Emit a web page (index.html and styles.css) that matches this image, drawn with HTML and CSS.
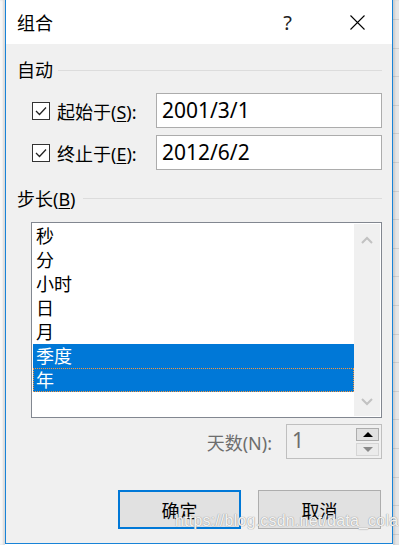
FILE: index.html
```html
<!DOCTYPE html>
<html lang="zh-CN">
  <head>
    <meta charset="UTF-8" />
    <meta name="viewport" content="width=device-width, initial-scale=1.0" />
    <title>组合</title>
    <link rel="stylesheet" href="styles.css">
  </head>
  <body>
    <div class="sheet-left"></div>

    <div class="dialog">
      <!-- Title bar -->
      <div class="titlebar">
        <span class="title">组合</span>
        <span class="help">?</span>
        <span class="close">
          <svg width="15" height="15" viewBox="0 0 15 15">
            <path d="M0.5 0.5 L14.5 14.5 M14.5 0.5 L0.5 14.5" stroke="#000" stroke-width="1.1" fill="none" />
          </svg>
        </span>
      </div>

      <div class="content">
        <div class="group-head">
          <span>自动</span>
          <div class="rule"></div>
        </div>

        <div class="date-row">
          <label class="check">
            <span class="box">
              <svg width="16" height="16" viewBox="0 0 16 16">
                <polyline points="3,8 6.5,11.5 13,4.5" stroke="#222" stroke-width="1.3" fill="none" />
              </svg>
            </span>
            <span>起始于(<u>S</u>):</span>
          </label>
          <div class="field">2001/3/1</div>
        </div>

        <div class="date-row">
          <label class="check">
            <span class="box">
              <svg width="16" height="16" viewBox="0 0 16 16">
                <polyline points="3,8 6.5,11.5 13,4.5" stroke="#222" stroke-width="1.3" fill="none" />
              </svg>
            </span>
            <span>终止于(<u>E</u>):</span>
          </label>
          <div class="field">2012/6/2</div>
        </div>

        <div class="group-head step-head">
          <span>步长(<u>B</u>)</span>
          <div class="rule"></div>
        </div>

        <div class="listbox">
          <ul class="items">
            <li>秒</li>
            <li>分</li>
            <li>小时</li>
            <li>日</li>
            <li>月</li>
            <li class="selected">季度</li>
            <li class="selected focused">年</li>
          </ul>
          <div class="scrollbar">
            <svg width="12" height="8" viewBox="0 0 12 8">
              <polyline points="1,7 6,2 11,7" stroke="#c2c2c2" stroke-width="2" fill="none" />
            </svg>
            <svg width="12" height="8" viewBox="0 0 12 8">
              <polyline points="1,1 6,6 11,1" stroke="#c2c2c2" stroke-width="2" fill="none" />
            </svg>
          </div>
        </div>

        <div class="days-row">
          <span class="days-label">天数(N):</span>
          <div class="spinner">
            <span class="spin-value">1</span>
            <div class="spin-buttons">
              <span class="spin-up"></span>
              <span class="spin-down"></span>
            </div>
          </div>
        </div>

        <div class="actions">
          <button class="btn primary">确定</button>
          <button class="btn">取消</button>
        </div>
      </div>

      <div class="watermark">https://blog.csdn.net/data_cola</div>
    </div>

    <div class="sheet-right"></div>
  </body>
</html>
```

FILE: styles.css
```css
/* Page */
body {
  margin: 0;
  width: 399px;
  height: 545px;
  overflow: hidden;
  display: flex;
  background: #fff;
  font-family: "Noto Sans", "Noto Sans CJK SC", sans-serif;
  font-size: 18px;
  color: #000;
}

/* Bits of the worksheet behind the dialog */
.sheet-left {
  width: 5px;
  background: #f7f7f7;
  box-shadow: inset -2px 0 2px rgba(0, 0, 0, 0.12);
}

.sheet-right {
  flex: 1;
  background: repeating-linear-gradient(
    to bottom,
    #e6e6e6 0,
    #e6e6e6 19px,
    #cfcfcf 19px,
    #cfcfcf 20px,
    #e6e6e6 20px,
    #e6e6e6 28.6px
  );
  box-shadow: inset 2px 0 2px rgba(0, 0, 0, 0.1);
}

/* Dialog frame */
.dialog {
  position: relative;
  width: 388px;
  height: 544px;
  box-sizing: border-box;
  border: 1px solid #1883d7;
  border-top: none;
  background: #f0f0f0;
  display: flex;
  flex-direction: column;
}

.titlebar {
  height: 44px;
  background: #fff;
  display: flex;
  align-items: center;
}

.title {
  flex: 1;
  padding-left: 11px;
  font-size: 18px;
}

.help {
  width: 69px;
  text-align: center;
  font-size: 20px;
  color: #222;
}

.close {
  width: 70px;
  display: flex;
  justify-content: center;
}

/* Body */
.content {
  padding: 0 10px 0 11px;
  display: flex;
  flex-direction: column;
}

.group-head {
  display: flex;
  align-items: center;
  height: 24px;
  margin-top: 14px;
  line-height: 24px;
}

.group-head .rule {
  flex: 1;
  height: 1px;
  background: #dcdcdc;
  margin-left: 5px;
}

.step-head {
  margin-top: 17px;
}

.step-head .rule {
  margin-left: 7px;
  margin-top: -2px;
}

u {
  text-decoration-thickness: 1px;
  text-underline-offset: 2px;
}

.date-row {
  display: flex;
  align-items: center;
  margin-top: 11px;
  padding-left: 15px;
}

.date-row + .date-row {
  margin-top: 7px;
}

.check {
  width: 124px;
  display: flex;
  align-items: center;
  gap: 7px;
  white-space: nowrap;
}

.box {
  width: 18px;
  height: 18px;
  box-sizing: border-box;
  border: 1px solid #333;
  background: #fff;
  display: flex;
  align-items: center;
  justify-content: center;
}

.field {
  flex: 1;
  height: 35px;
  box-sizing: border-box;
  border: 1px solid #acacac;
  background: #fff;
  padding-left: 5px;
  font-size: 21px;
  line-height: 33px;
}

/* List box */
.listbox {
  margin: 11px 0 0 14px;
  height: 196px;
  box-sizing: border-box;
  border: 1px solid #828790;
  background: #fff;
  padding: 1px;
  display: flex;
}

.items {
  flex: 1;
  list-style: none;
  margin: 0;
  padding: 0;
}

.items li {
  height: 24px;
  line-height: 24px;
  padding-left: 3px;
}

.items li.selected {
  background: #0078d7;
  color: #fff;
}

.items li.focused {
  outline: 1px dotted #f7963c;
  outline-offset: -1px;
}

.scrollbar {
  width: 26px;
  background: #f0f0f0;
  display: flex;
  flex-direction: column;
  justify-content: space-between;
  align-items: center;
  padding: 12px 0 10px;
}

/* Days spinner */
.days-row {
  margin-top: 6px;
  display: flex;
  justify-content: flex-end;
  align-items: center;
  gap: 14px;
}

.days-label {
  color: #6d6d6d;
}

.spinner {
  width: 96px;
  height: 35px;
  box-sizing: border-box;
  border: 1px solid #bfbfbf;
  padding: 3px 2px 2px 4px;
  display: flex;
  background: #f0f0f0;
}

.spin-value {
  flex: 1;
  color: #6d6d6d;
  font-size: 21px;
  line-height: 24px;
  padding-left: 1px;
}

.spin-buttons {
  width: 23px;
  display: flex;
  flex-direction: column;
  gap: 2px;
}

.spin-up,
.spin-down {
  flex: 1;
  box-sizing: border-box;
  display: flex;
  align-items: center;
  justify-content: center;
}

.spin-up {
  border: 1px solid #adadad;
  background: #e1e1e1;
}

.spin-down {
  border: 1px solid #d5d5d5;
  background: #ebebeb;
}

.spin-up::after {
  content: "";
  border-left: 5px solid transparent;
  border-right: 5px solid transparent;
  border-bottom: 5px solid #000;
}

.spin-down::after {
  content: "";
  border-left: 5px solid transparent;
  border-right: 5px solid transparent;
  border-top: 5px solid #8a8a8a;
}

/* Buttons */
.actions {
  margin-top: 31px;
  display: flex;
  justify-content: flex-end;
  gap: 17px;
  padding-right: 1px;
}

.btn {
  width: 123px;
  height: 39px;
  box-sizing: border-box;
  border: 1px solid #adadad;
  background: #e1e1e1;
  font-family: "Noto Sans CJK SC", sans-serif;
  font-size: 18px;
  color: #000;
  padding: 0;
}

.btn.primary {
  border: 2px solid #0078d7;
}

/* Blog watermark on top of the screenshot */
.watermark {
  position: absolute;
  left: 169px;
  top: 512px;
  font-family: "Liberation Sans", Arial, sans-serif;
  font-size: 16px;
  letter-spacing: 0.2px;
  color: rgba(255, 255, 255, 0.9);
  text-shadow: 0 0 1px #9a9a9a, 0 0 1px #9a9a9a;
  white-space: nowrap;
}
```
